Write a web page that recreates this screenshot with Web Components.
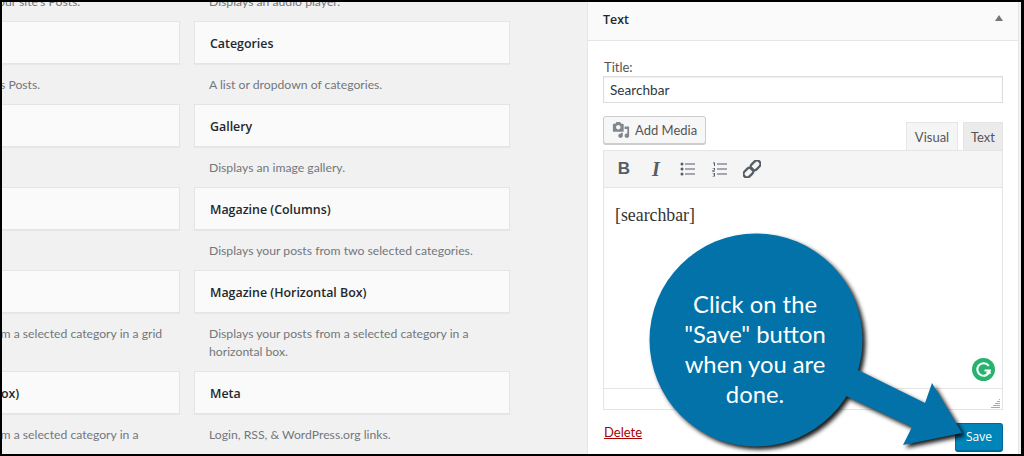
<!DOCTYPE html>
<html>
<head>
<meta charset="utf-8">
<style>
html, body { margin: 0; padding: 0; }
body { width: 1024px; height: 456px; overflow: hidden; font-family: Lato, sans-serif; }
</style>
</head>
<body>
<admin-frame>
  <widget-grid>
    <widget-item name="Archives" desc="A monthly archive of your site's Posts."></widget-item>
    <widget-item name="Audio" desc="Displays an audio player."></widget-item>
    <widget-item name="Calendar" desc="A calendar of your site's Posts."></widget-item>
    <widget-item name="Categories" desc="A list or dropdown of categories."></widget-item>
    <widget-item name="Custom HTML" desc="Arbitrary HTML code."></widget-item>
    <widget-item name="Gallery" desc="Displays an image gallery."></widget-item>
    <widget-item name="Image" desc="Displays an image."></widget-item>
    <widget-item name="Magazine (Columns)" desc="Displays your posts from two selected categories."></widget-item>
    <widget-item name="Magazine (Grid)" desc="Displays your posts from a selected category in a grid layout."></widget-item>
    <widget-item name="Magazine (Horizontal Box)" desc="Displays your posts from a selected category in a horizontal box."></widget-item>
    <widget-item name="Magazine (Vertical Box)" desc="Displays your posts from a selected category in a vertical box."></widget-item>
    <widget-item name="Meta" desc="Login, RSS, &amp; WordPress.org links."></widget-item>
  </widget-grid>
  <text-widget title="Text"></text-widget>
  <callout-bubble>Click on the<br>"Save" button<br>when you are<br>done.</callout-bubble>
</admin-frame>

<script>
class AdminFrame extends HTMLElement {
  constructor() {
    super();
    this.attachShadow({ mode: "open" });
  }
  connectedCallback() {
    this.shadowRoot.innerHTML = `
    <style>
    :host {
      display: flex;
      position: relative;
      box-sizing: border-box;
      width: 1024px;
      height: 456px;
      border: solid #000;
      border-width: 2px 3px 2px 2px;
      background: #f1f1f1;
      overflow: hidden;
      color: #444;
    }
    </style>
    <slot></slot>`;
  }
}

class WidgetGrid extends HTMLElement {
  constructor() {
    super();
    this.attachShadow({ mode: "open" });
  }
  connectedCallback() {
    this.shadowRoot.innerHTML = `
    <style>
    :host {
      display: grid;
      grid-template-columns: 316px 316px;
      column-gap: 14px;
      align-content: start;
      flex: none;
      width: 646px;
      margin: -64px 0 0 -138px;
    }
    </style>
    <slot></slot>`;
  }
}

class WidgetItem extends HTMLElement {
  constructor() {
    super();
    this.attachShadow({ mode: "open" });
  }
  connectedCallback() {
    this.shadowRoot.innerHTML = `
    <style>
    :host { display: block; font: 12.200px/18px Lato, sans-serif; }
    .card {
      box-sizing: border-box;
      height: 43px;
      padding: 2px 15px 0;
      display: flex;
      align-items: center;
      background: #fafafa;
      border: 1px solid #e5e5e5;
      box-shadow: 0 1px 1px rgba(0,0,0,.04);
      font: 600 12.400px/18px "Open Sans", sans-serif;
      color: #23282d;
    }
    .desc { margin: 12px 0 10px; padding: 0 15px; color: #72777c; }
    </style>
    <div class="card">${this.getAttribute("name")}</div>
    <div class="desc">${this.getAttribute("desc")}</div>`;
  }
}

class TextWidget extends HTMLElement {
  constructor() {
    super();
    this.attachShadow({ mode: "open" });
  }
  connectedCallback() {
    this.shadowRoot.innerHTML = `
    <style>
    :host {
      display: block;
      box-sizing: border-box;
      flex: none;
      width: 432px;
      height: 470px;
      margin: -2px 0 0 77px;
      background: #fff;
      border: 1px solid #e5e5e5;
      font: 13px/18px Lato, sans-serif;
      color: #555;
    }
    .head {
      height: 40px;
      padding: 0 15px 1px;
      box-sizing: border-box;
      display: flex;
      align-items: center;
      justify-content: space-between;
      background: #fafafa;
      border-bottom: 1px solid #e5e5e5;
      font: 600 12.400px/18px "Open Sans", sans-serif;
      color: #23282d;
    }
    .caret { width: 0; height: 0; border: 4.500px solid transparent; border-top: 0; border-bottom: 6px solid #72777c; margin: 0 0 4px; }
    .body { padding: 17px 15px 0; }
    label { display: block; height: 18px; padding-left: 1px; }
    .input {
      box-sizing: border-box;
      height: 27px;
      padding: 1px 6px 0;
      border: 1px solid #ddd;
      font-size: 13.600px;
      line-height: 25px;
      color: #32373c;
      box-shadow: inset 0 1px 2px rgba(0,0,0,.07);
    }
    .media-row { display: flex; justify-content: space-between; align-items: flex-end; margin-top: 13px; height: 34px; }
    </style>
    <div class="head"><span>${this.getAttribute("title")}</span><span class="caret"></span></div>
    <div class="body">
      <label>Title:</label>
      <div class="input">Searchbar</div>
      <div class="media-row">
        <media-button></media-button>
        <editor-tabs></editor-tabs>
      </div>
      <rich-editor></rich-editor>
      <widget-actions></widget-actions>
    </div>`;
  }
}

class MediaButton extends HTMLElement {
  constructor() {
    super();
    this.attachShadow({ mode: "open" });
  }
  connectedCallback() {
    this.shadowRoot.innerHTML = `
    <style>
    :host {
      display: flex;
      align-items: center;
      gap: 5px;
      box-sizing: border-box;
      width: 103px;
      height: 28px;
      margin-bottom: 6px;
      padding: 0 0 0 8px;
      background: #f7f7f7;
      border: 1px solid #ccc;
      border-radius: 3px;
      box-shadow: 0 1px 0 #ccc;
      color: #555;
    }
    svg { display: block; flex: none; }
    </style>
    <svg width="18" height="18" viewBox="0 0 20 20" fill="#82878c">
      <path d="M13 11V4c0-.55-.45-1-1-1h-1.670L9 1H5L3.670 3H2c-.55 0-1 .45-1 1v7c0 .55.45 1 1 1h10c.55 0 1-.45 1-1zM7 4.500c1.380 0 2.500 1.120 2.500 2.500S8.380 9.500 7 9.500 4.500 8.380 4.500 7 5.620 4.500 7 4.500zM14 6h5v10.500c0 1.380-1.120 2.500-2.500 2.500S14 17.880 14 16.500s1.120-2.500 2.500-2.500c.17 0 .34.020.5.050V9h-3V6zm-4 8.050V13h2v3.500c0 1.380-1.120 2.500-2.500 2.500S7 17.880 7 16.500 8.120 14 9.500 14c.17 0 .34.020.5.050z"/>
    </svg>
    <span>Add Media</span>`;
  }
}

class EditorTabs extends HTMLElement {
  constructor() {
    super();
    this.attachShadow({ mode: "open" });
  }
  connectedCallback() {
    this.shadowRoot.innerHTML = `
    <style>
    :host { display: flex; gap: 5px; position: relative; top: 1px; }
    span {
      box-sizing: border-box;
      width: 40px;
      height: 29px;
      display: flex;
      align-items: center;
      justify-content: center;
      border: 1px solid #e5e5e5;
      border-bottom: 0;
      background: #ebebeb;
      color: #555;
    }
    .on { width: 52px; background: #f5f5f5; }
    </style>
    <span class="on">Visual</span><span>Text</span>`;
  }
}

class RichEditor extends HTMLElement {
  constructor() {
    super();
    this.attachShadow({ mode: "open" });
  }
  connectedCallback() {
    this.shadowRoot.innerHTML = `
    <style>
    :host {
      display: block;
      position: relative;
      box-sizing: border-box;
      height: 260px;
      border: 1px solid #e5e5e5;
    }
    .bar {
      box-sizing: border-box;
      height: 37px;
      display: flex;
      align-items: center;
      gap: 8px;
      padding: 0 0 0 8px;
      background: #f5f5f5;
      border-bottom: 1px solid #e5e5e5;
    }
    .btn { width: 24px; height: 24px; display: flex; align-items: center; justify-content: center; color: #555d66; font: 700 17px/24px "Liberation Sans", sans-serif; }
    .btn.it { font: italic 700 20px/24px "Liberation Serif", serif; }
    .content {
      box-sizing: border-box;
      height: 201px;
      padding: 15px 11px;
      background: #fff;
      font: 17.800px/24px "Liberation Serif", serif;
      color: #333;
      border-bottom: 1px solid #e5e5e5;
    }
    .status { height: 20px; background: #fff; }
    .g { position: absolute; left: 368px; top: 207px; }
    .grip { position: absolute; right: 1px; bottom: 1px; }
    svg { display: block; }
    </style>
    <div class="bar">
      <span class="btn">B</span>
      <span class="btn it">I</span>
      <span class="btn"><svg width="16" height="14" viewBox="0 0 16 14" fill="#555d66"><circle cx="2" cy="2" r="1.500"/><circle cx="2" cy="7" r="1.500"/><circle cx="2" cy="12" r="1.500"/><path d="M5 1.500h10v1H5zM5 6.500h10v1H5zM5 11.500h10v1H5z"/></svg></span>
      <span class="btn"><svg width="16" height="15" viewBox="0 0 16 15" fill="#555d66"><path d="M1 .500h2v3.500H2V1.500H1zM.5 6h2.500v2.500H1.500v1H3v.5H.5V8H2V6.500H.5zM.5 11H3v3.500H.5V14H2v-.8H1v-.5h1v-1.200H.5z"/><path d="M5 1.500h10v1H5zM5 6.500h10v1H5zM5 11.500h10v1H5z"/></svg></span>
      <span class="btn"><svg width="18" height="18" viewBox="0 0 18 18" fill="none" stroke="#555d66" stroke-width="2.300"><g transform="rotate(45 9 9)"><rect x="5.500" y="-1.500" width="7" height="11" rx="3.500"/><rect x="5.500" y="8.500" width="7" height="11" rx="3.500"/></g></svg></span>
    </div>
    <div class="content">[searchbar]</div>
    <div class="status"></div>
    <svg class="g" width="23" height="23" viewBox="0 0 22 22"><circle cx="11" cy="11" r="11" fill="#27b36d"/><path d="M16 7.500a6 6 0 1 0 1 4.500h-5" fill="none" stroke="#fff" stroke-width="2"/><path d="M13 14.500l3.500-3 2 3.500z" fill="#fff"/></svg>
    <svg class="grip" width="10" height="10" viewBox="0 0 10 10" fill="#aaa"><path d="M8 1h1v1H8zM6 3h3v1H6zM4 5h5v1H4zM2 7h7v1H2zM0 9h9v1H0z"/></svg>`;
  }
}

class WidgetActions extends HTMLElement {
  constructor() {
    super();
    this.attachShadow({ mode: "open" });
  }
  connectedCallback() {
    this.shadowRoot.innerHTML = `
    <style>
    :host { display: flex; justify-content: space-between; align-items: flex-start; padding-top: 13px; }
    a { color: #a00; text-decoration: underline; margin: 0 0 0 1px; }
    button {
      box-sizing: border-box;
      width: 48px;
      height: 29px;
      padding: 0;
      background: #0085ba;
      border: 1px solid #006799;
      border-bottom-width: 2px;
      border-radius: 3px;
      color: #fff;
      font: 12px/24px "Open Sans", sans-serif;
    }
    </style>
    <a href="#">Delete</a>
    <button>Save</button>`;
  }
}

class CalloutBubble extends HTMLElement {
  constructor() {
    super();
    this.attachShadow({ mode: "open" });
  }
  connectedCallback() {
    this.shadowRoot.innerHTML = `
    <style>
    :host { position: absolute; left: 638px; top: 220px; width: 340px; height: 232px; }
    svg { position: absolute; left: 0; top: 0; filter: drop-shadow(3px 3px 2px rgba(0,0,0,.9)); overflow: visible; }
    .txt {
      position: absolute;
      left: 5px;
      top: 67px;
      width: 220px;
      text-align: center;
      color: #fff;
      font: 23.800px/30px Lato, sans-serif;
    }
    </style>
    <svg width="340" height="232" viewBox="640 222 340 232" fill="#0272a9">
      <circle cx="756" cy="340" r="106.500"/>
      <polygon points="858,370 925,403 932,383 962,433 903,445 912,427 846,396"/>
    </svg>
    <div class="txt"><slot></slot></div>`;
  }
}

customElements.define("admin-frame", AdminFrame);
customElements.define("widget-grid", WidgetGrid);
customElements.define("widget-item", WidgetItem);
customElements.define("text-widget", TextWidget);
customElements.define("media-button", MediaButton);
customElements.define("editor-tabs", EditorTabs);
customElements.define("rich-editor", RichEditor);
customElements.define("widget-actions", WidgetActions);
customElements.define("callout-bubble", CalloutBubble);
</script>
</body>
</html>
